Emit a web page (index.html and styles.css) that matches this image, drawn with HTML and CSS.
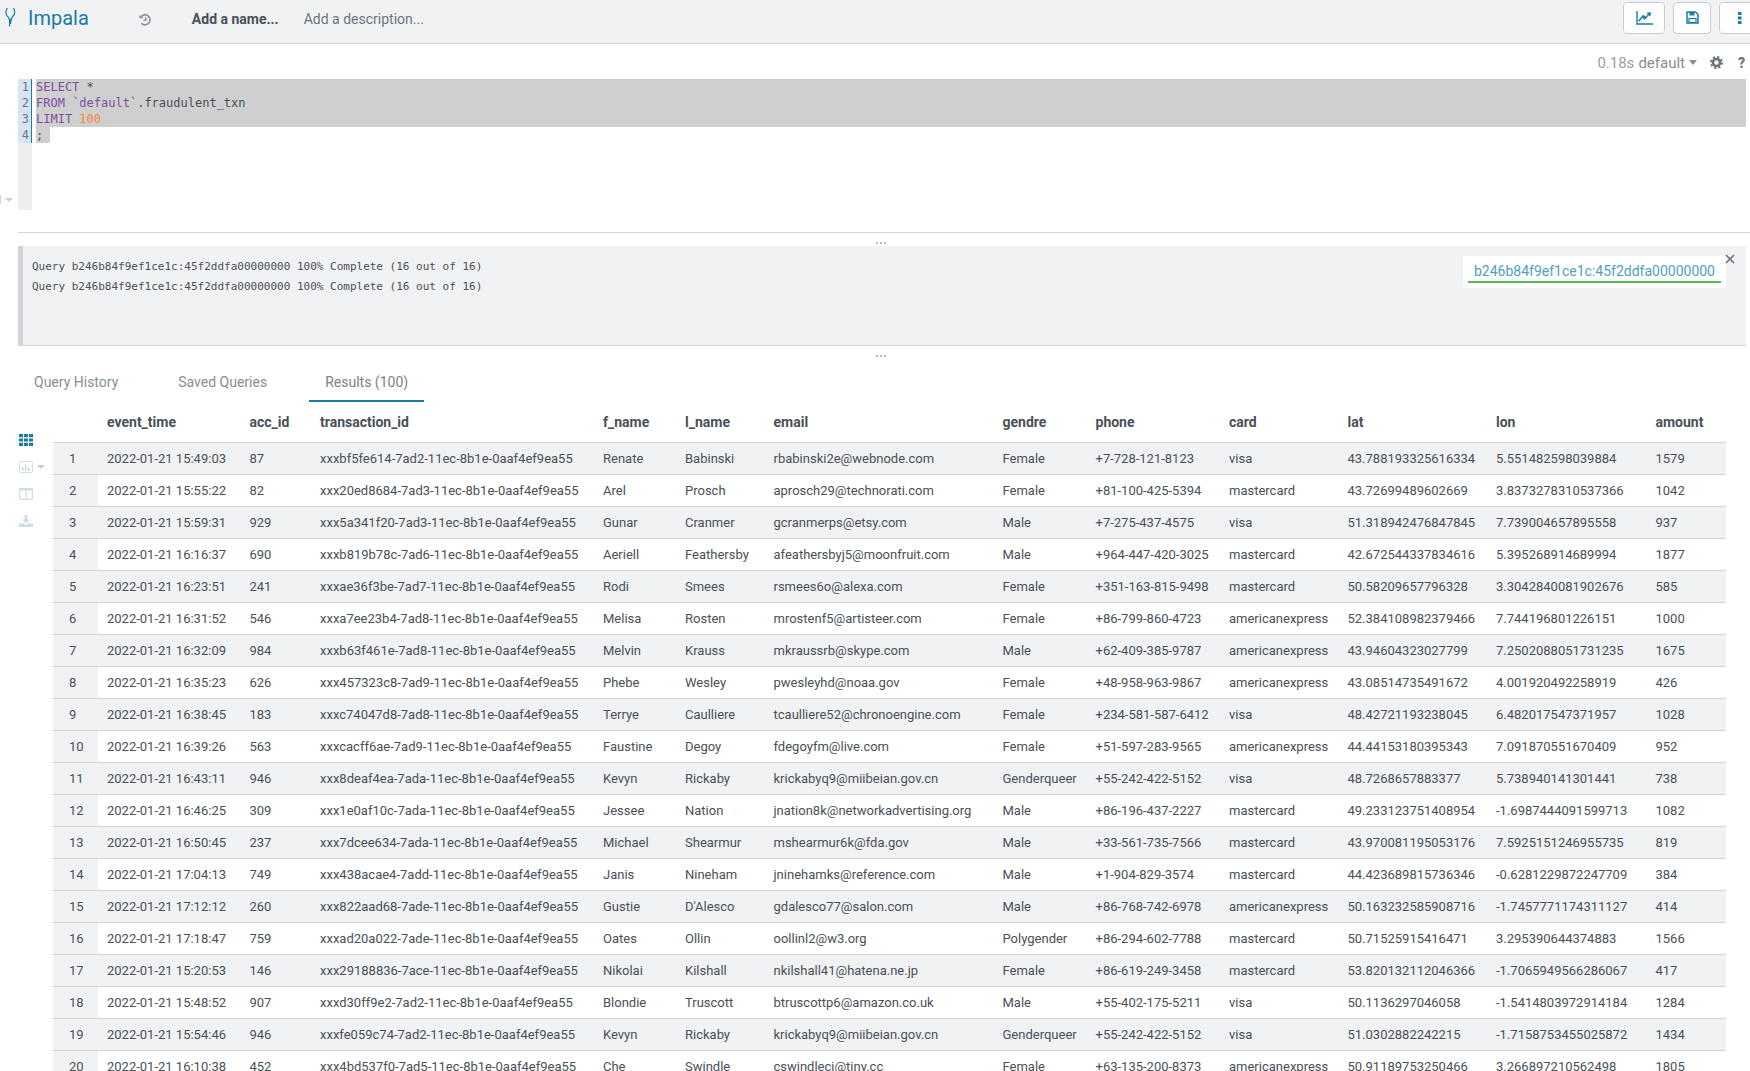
FILE: index.html
```html
<!DOCTYPE html>
<html lang="en">
<head>
<meta charset="utf-8">
<title>Impala</title>
<link rel="stylesheet" href="styles.css">
</head>
<body>
<div class="app">
  <header class="topbar">
    <svg class="logo" viewBox="0 0 11 19" width="11" height="19"><path d="M2.500 0C.3 3 .2 6.500 3.500 9.500 4.700 10.600 4.800 13 4.600 18.500M8.500 0c1.700 3 1.600 6.500-1.200 9C6.400 9.900 6 12 5.500 16" fill="none" stroke="#1b7ca3" stroke-width="1.200"/><path d="M3.800 11l3-.5-1.600 5z" fill="#1b7ca3"/></svg>
    <span class="brand">Impala</span>
    <svg class="history" viewBox="0 0 14 14" width="13" height="14"><path d="M2.200 3.500A5.400 5.400 0 1 1 2.500 10.500" fill="none" stroke="#868e96" stroke-width="1.700"/><path d="M.5 1.500l4.500 3.700H.5z" fill="#868e96"/><path d="M7.200 4v3.400H4.800" fill="none" stroke="#868e96" stroke-width="1.500"/></svg>
    <span class="query-name">Add a name...</span>
    <span class="query-desc">Add a description...</span>
    <div class="actions">
      <button class="btn btn-chart"><svg viewBox="0 0 17 14" width="17" height="14"><path d="M1 0v13h16" fill="none" stroke="#1b7ca3" stroke-width="1.400"/><path d="M3 10.500l3.500-4 2.500 2 3.500-4.500 1.500 1.200.8-3.700-3.700.4 1.200 1.100-2.500 3-2.500-2-5 5.500z" fill="#1b7ca3" stroke="#1b7ca3" stroke-width=".6"/></svg></button>
      <button class="btn btn-save"><svg viewBox="0 0 13 13" width="13" height="13"><path d="M1 1h8.500L12 3.500V12H1z" fill="none" stroke="#1b7ca3" stroke-width="1.500"/><rect x="3.500" y="1" width="5" height="3.500" fill="#1b7ca3"/><rect x="3" y="7.500" width="7" height="4" fill="none" stroke="#1b7ca3" stroke-width="1.200"/></svg></button>
      <button class="btn btn-more"><svg viewBox="0 0 4 12" width="4" height="12"><rect width="3.500" height="3" fill="#1b7ca3"/><rect y="4.500" width="3.500" height="3" fill="#1b7ca3"/><rect y="9" width="3.500" height="3" fill="#1b7ca3"/></svg></button>
    </div>
  </header>

  <div class="statusline">
    <span class="status-time">0.18s</span>
    <span class="status-db">default</span>
    <span class="caret caret-status"></span>
    <svg class="gear" viewBox="0 0 14 14" width="13" height="13"><circle cx="7" cy="7" r="3.800" fill="none" stroke="#6c757d" stroke-width="2.800"/><circle cx="7" cy="7" r="6" fill="none" stroke="#6c757d" stroke-width="2" stroke-dasharray="2.400 2.300"/></svg>
    <span class="help">?</span>
  </div>

  <section class="editor-row">
    <div class="editor-side"><span class="side-tick"></span><span class="caret caret-side"></span></div>
    <div class="gutter">
      <div class="gutter-lines">
        <div>1</div><div>2</div><div>3</div><div>4</div>
      </div>
    </div>
    <div class="code">
      <div class="code-line sel"><span class="kw">SELECT</span> *</div>
      <div class="code-line sel"><span class="kw">FROM</span> <span class="kw">`default`</span>.fraudulent_txn</div>
      <div class="code-line sel"><span class="kw">LIMIT</span> <span class="num">100</span></div>
      <div class="code-line"><span class="sel-end">;</span></div>
    </div>
  </section>

  <div class="divider"><span class="grip"></span></div>

  <section class="log">
    <div class="log-text">
      <div>Query b246b84f9ef1ce1c:45f2ddfa00000000 100% Complete (16 out of 16)</div>
      <div>Query b246b84f9ef1ce1c:45f2ddfa00000000 100% Complete (16 out of 16)</div>
    </div>
    <div class="job-box"><a class="job-link">b246b84f9ef1ce1c:45f2ddfa00000000</a></div>
    <svg class="close" viewBox="0 0 10 10" width="10" height="10"><path d="M1 1l8 8M9 1l-8 8" stroke="#6c757d" stroke-width="1.700"/></svg>
  </section>
  <div class="grip-row"><span class="grip"></span></div>

  <nav class="tabs">
    <span class="tab tab-history">Query History</span>
    <span class="tab tab-saved">Saved Queries</span>
    <span class="tab tab-results">Results (100)</span>
  </nav>

  <section class="results">
    <aside class="tools">
      <svg class="tool tool-grid" viewBox="0 0 14 12" width="14" height="12"><path d="M0 0h4v3.200H0zM5 0h4v3.200H5zM10 0h4v3.200h-4zM0 4.400h4v3.200H0zM5 4.400h4v3.200H5zM10 4.400h4v3.200h-4zM0 8.800h4V12H0zM5 8.800h4V12H5zM10 8.800h4V12h-4z" fill="#1b7ca3"/></svg>
      <div class="tool-chart"><svg viewBox="0 0 14 12" width="14" height="12"><rect x=".5" y=".5" width="13" height="11" rx="1" fill="none" stroke="#d0dde4"/><path d="M3 6v4h1.300V6zM6 3.500V10h1.300V3.500zM9 7v3h1.300V7z" fill="#c6d5dd"/></svg><span class="caret caret-tool"></span></div>
      <svg class="tool tool-columns" viewBox="0 0 14 12" width="14" height="12"><rect x=".6" y=".6" width="12.800" height="10.800" rx="1" fill="none" stroke="#d0dde4" stroke-width="1.200"/><path d="M7 1v10" stroke="#d0dde4" stroke-width="1.200"/><path d="M1 1h12v1.500H1z" fill="#d0dde4"/></svg>
      <svg class="tool tool-download" viewBox="0 0 14 12" width="14" height="12"><path d="M5.500 0h3v4.500H11L7 8.300 3 4.500h2.500zM0 8.500h4.500L7 10l2.500-1.500H14V12H0z" fill="#d0dde4"/></svg>
    </aside>
    <div class="table-wrap">
      <table class="grid">
        <colgroup>
          <col class="c-idx"><col class="c-time"><col class="c-acc"><col class="c-txn"><col class="c-fn"><col class="c-ln"><col class="c-email"><col class="c-gen"><col class="c-phone"><col class="c-card"><col class="c-lat"><col class="c-lon"><col class="c-amt">
        </colgroup>
        <thead>
          <tr><th></th><th>event_time</th><th>acc_id</th><th>transaction_id</th><th>f_name</th><th>l_name</th><th>email</th><th>gendre</th><th>phone</th><th>card</th><th>lat</th><th>lon</th><th>amount</th></tr>
        </thead>
        <tbody>
          <tr><td>1</td><td>2022-01-21 15:49:03</td><td>87</td><td>xxxbf5fe614-7ad2-11ec-8b1e-0aaf4ef9ea55</td><td>Renate</td><td>Babinski</td><td>rbabinski2e@webnode.com</td><td>Female</td><td>+7-728-121-8123</td><td>visa</td><td>43.788193325616334</td><td>5.551482598039884</td><td>1579</td></tr>
          <tr><td>2</td><td>2022-01-21 15:55:22</td><td>82</td><td>xxx20ed8684-7ad3-11ec-8b1e-0aaf4ef9ea55</td><td>Arel</td><td>Prosch</td><td>aprosch29@technorati.com</td><td>Female</td><td>+81-100-425-5394</td><td>mastercard</td><td>43.72699489602669</td><td>3.8373278310537366</td><td>1042</td></tr>
          <tr><td>3</td><td>2022-01-21 15:59:31</td><td>929</td><td>xxx5a341f20-7ad3-11ec-8b1e-0aaf4ef9ea55</td><td>Gunar</td><td>Cranmer</td><td>gcranmerps@etsy.com</td><td>Male</td><td>+7-275-437-4575</td><td>visa</td><td>51.318942476847845</td><td>7.739004657895558</td><td>937</td></tr>
          <tr><td>4</td><td>2022-01-21 16:16:37</td><td>690</td><td>xxxb819b78c-7ad6-11ec-8b1e-0aaf4ef9ea55</td><td>Aeriell</td><td>Feathersby</td><td>afeathersbyj5@moonfruit.com</td><td>Male</td><td>+964-447-420-3025</td><td>mastercard</td><td>42.672544337834616</td><td>5.395268914689994</td><td>1877</td></tr>
          <tr><td>5</td><td>2022-01-21 16:23:51</td><td>241</td><td>xxxae36f3be-7ad7-11ec-8b1e-0aaf4ef9ea55</td><td>Rodi</td><td>Smees</td><td>rsmees6o@alexa.com</td><td>Female</td><td>+351-163-815-9498</td><td>mastercard</td><td>50.58209657796328</td><td>3.3042840081902676</td><td>585</td></tr>
          <tr><td>6</td><td>2022-01-21 16:31:52</td><td>546</td><td>xxxa7ee23b4-7ad8-11ec-8b1e-0aaf4ef9ea55</td><td>Melisa</td><td>Rosten</td><td>mrostenf5@artisteer.com</td><td>Female</td><td>+86-799-860-4723</td><td>americanexpress</td><td>52.384108982379466</td><td>7.744196801226151</td><td>1000</td></tr>
          <tr><td>7</td><td>2022-01-21 16:32:09</td><td>984</td><td>xxxb63f461e-7ad8-11ec-8b1e-0aaf4ef9ea55</td><td>Melvin</td><td>Krauss</td><td>mkraussrb@skype.com</td><td>Male</td><td>+62-409-385-9787</td><td>americanexpress</td><td>43.94604323027799</td><td>7.2502088051731235</td><td>1675</td></tr>
          <tr><td>8</td><td>2022-01-21 16:35:23</td><td>626</td><td>xxx457323c8-7ad9-11ec-8b1e-0aaf4ef9ea55</td><td>Phebe</td><td>Wesley</td><td>pwesleyhd@noaa.gov</td><td>Female</td><td>+48-958-963-9867</td><td>americanexpress</td><td>43.08514735491672</td><td>4.001920492258919</td><td>426</td></tr>
          <tr><td>9</td><td>2022-01-21 16:38:45</td><td>183</td><td>xxxc74047d8-7ad8-11ec-8b1e-0aaf4ef9ea55</td><td>Terrye</td><td>Caulliere</td><td>tcaulliere52@chronoengine.com</td><td>Female</td><td>+234-581-587-6412</td><td>visa</td><td>48.42721193238045</td><td>6.482017547371957</td><td>1028</td></tr>
          <tr><td>10</td><td>2022-01-21 16:39:26</td><td>563</td><td>xxxcacff6ae-7ad9-11ec-8b1e-0aaf4ef9ea55</td><td>Faustine</td><td>Degoy</td><td>fdegoyfm@live.com</td><td>Female</td><td>+51-597-283-9565</td><td>americanexpress</td><td>44.44153180395343</td><td>7.091870551670409</td><td>952</td></tr>
          <tr><td>11</td><td>2022-01-21 16:43:11</td><td>946</td><td>xxx8deaf4ea-7ada-11ec-8b1e-0aaf4ef9ea55</td><td>Kevyn</td><td>Rickaby</td><td>krickabyq9@miibeian.gov.cn</td><td>Genderqueer</td><td>+55-242-422-5152</td><td>visa</td><td>48.7268657883377</td><td>5.738940141301441</td><td>738</td></tr>
          <tr><td>12</td><td>2022-01-21 16:46:25</td><td>309</td><td>xxx1e0af10c-7ada-11ec-8b1e-0aaf4ef9ea55</td><td>Jessee</td><td>Nation</td><td>jnation8k@networkadvertising.org</td><td>Male</td><td>+86-196-437-2227</td><td>mastercard</td><td>49.233123751408954</td><td>-1.6987444091599713</td><td>1082</td></tr>
          <tr><td>13</td><td>2022-01-21 16:50:45</td><td>237</td><td>xxx7dcee634-7ada-11ec-8b1e-0aaf4ef9ea55</td><td>Michael</td><td>Shearmur</td><td>mshearmur6k@fda.gov</td><td>Male</td><td>+33-561-735-7566</td><td>mastercard</td><td>43.970081195053176</td><td>7.5925151246955735</td><td>819</td></tr>
          <tr><td>14</td><td>2022-01-21 17:04:13</td><td>749</td><td>xxx438acae4-7add-11ec-8b1e-0aaf4ef9ea55</td><td>Janis</td><td>Nineham</td><td>jninehamks@reference.com</td><td>Male</td><td>+1-904-829-3574</td><td>mastercard</td><td>44.423689815736346</td><td>-0.6281229872247709</td><td>384</td></tr>
          <tr><td>15</td><td>2022-01-21 17:12:12</td><td>260</td><td>xxx822aad68-7ade-11ec-8b1e-0aaf4ef9ea55</td><td>Gustie</td><td>D'Alesco</td><td>gdalesco77@salon.com</td><td>Male</td><td>+86-768-742-6978</td><td>americanexpress</td><td>50.163232585908716</td><td>-1.7457771174311127</td><td>414</td></tr>
          <tr><td>16</td><td>2022-01-21 17:18:47</td><td>759</td><td>xxxad20a022-7ade-11ec-8b1e-0aaf4ef9ea55</td><td>Oates</td><td>Ollin</td><td>oollinl2@w3.org</td><td>Polygender</td><td>+86-294-602-7788</td><td>mastercard</td><td>50.71525915416471</td><td>3.295390644374883</td><td>1566</td></tr>
          <tr><td>17</td><td>2022-01-21 15:20:53</td><td>146</td><td>xxx29188836-7ace-11ec-8b1e-0aaf4ef9ea55</td><td>Nikolai</td><td>Kilshall</td><td>nkilshall41@hatena.ne.jp</td><td>Female</td><td>+86-619-249-3458</td><td>mastercard</td><td>53.820132112046366</td><td>-1.7065949566286067</td><td>417</td></tr>
          <tr><td>18</td><td>2022-01-21 15:48:52</td><td>907</td><td>xxxd30ff9e2-7ad2-11ec-8b1e-0aaf4ef9ea55</td><td>Blondie</td><td>Truscott</td><td>btruscottp6@amazon.co.uk</td><td>Male</td><td>+55-402-175-5211</td><td>visa</td><td>50.1136297046058</td><td>-1.5414803972914184</td><td>1284</td></tr>
          <tr><td>19</td><td>2022-01-21 15:54:46</td><td>946</td><td>xxxfe059c74-7ad2-11ec-8b1e-0aaf4ef9ea55</td><td>Kevyn</td><td>Rickaby</td><td>krickabyq9@miibeian.gov.cn</td><td>Genderqueer</td><td>+55-242-422-5152</td><td>visa</td><td>51.0302882242215</td><td>-1.7158753455025872</td><td>1434</td></tr>
          <tr><td>20</td><td>2022-01-21 16:10:38</td><td>452</td><td>xxx4bd537f0-7ad5-11ec-8b1e-0aaf4ef9ea55</td><td>Che</td><td>Swindle</td><td>cswindlecj@tiny.cc</td><td>Female</td><td>+63-135-200-8373</td><td>americanexpress</td><td>50.91189753250466</td><td>3.266897210562498</td><td>1805</td></tr>
        </tbody>
      </table>
    </div>
  </section>
</div>
</body>
</html>
```
FILE: styles.css
```css
* { box-sizing: border-box; }
html, body { margin: 0; height: 100%; overflow: hidden; background: #fff; }
body { font-family: Roboto, "Liberation Sans", sans-serif; font-size: 13px; color: #495057; }
.app { height: 1071px; display: flex; flex-direction: column; overflow: hidden; }

.topbar { flex: none; height: 44px; background: #f1f2f4; border-bottom: 1px solid #d2d4d6; display: flex; align-items: center; overflow: hidden; padding-left: 5px; }
.logo { flex: none; margin-top: -8px; }
.brand { font-size: 20px; color: #1b7ca3; margin-left: 12px; margin-top: -7px; }
.history { flex: none; margin-left: 50px; margin-top: -3px; }
.query-name { font-size: 14px; font-weight: 700; color: #495057; margin-left: 40px; margin-top: -6px; }
.query-desc { font-size: 14px; color: #6c757d; margin-left: 25px; margin-top: -6px; }
.actions { margin-left: auto; display: flex; gap: 8px; margin-top: -8px; margin-right: -11px; }
.btn { height: 32px; background: #fff; border: 1px solid #c9cdd1; border-radius: 4px; padding: 0; display: flex; align-items: center; justify-content: center; }
.btn-chart { width: 42px; }
.btn-save { width: 38px; }
.btn-more { width: 42px; }

.statusline { flex: none; height: 35px; display: flex; align-items: center; justify-content: flex-end; padding: 2px 4px 0 0; font-size: 15px; }
.status-time { color: #979ea5; }
.status-db { color: #868e96; margin-left: 4px; }
.caret { display: inline-block; width: 0; height: 0; border-left: 4px solid transparent; border-right: 4px solid transparent; border-top: 4px solid #868e96; }
.caret-status { margin-left: 4px; border-left-width: 4.5px; border-right-width: 4.5px; border-top-width: 5px; }
.gear { margin-left: 13px; }
.help { font-weight: 900; color: #6c757d; font-size: 14px; margin-left: 15px; width: 8px; }

.editor-row { flex: none; display: flex; height: 131px; padding-right: 4px; }
.editor-side { width: 18px; flex: none; display: flex; align-items: flex-end; padding-bottom: 6px; }
.side-tick { width: 1px; height: 9px; background: #ced4da; }
.caret-side { margin-left: 4px; margin-bottom: 2px; border-top-color: #c9cdd1; }
.gutter { width: 14px; flex: none; background: #eeeeee; font-family: "DejaVu Sans Mono", monospace; font-size: 12px; line-height: 16px; color: #6c757d; text-align: right; }
.gutter-lines { background: #d6e6f0; border-right: 1px solid #1b7ca3; padding-right: 2px; }
.code { flex: 1; padding-left: 4px; font-family: "DejaVu Sans Mono", monospace; font-size: 12px; line-height: 16px; color: #495057; }
.code-line { height: 16px; white-space: pre; }
.sel { background: #cfcfcf; }
.sel-end { display: inline-block; width: 14px; height: 16px; background: #cfcfcf; border-radius: 0 0 2px 0; }
.kw { color: #7b4ea3; }
.num { color: #f58a3c; }

.divider { flex: none; height: 1px; margin: 22px 0 0 18px; background: #d2d4d6; position: relative; }
.grip { display: block; width: 12px; height: 2px; background-image: radial-gradient(circle, #b8bcc0 1px, transparent 1px); background-size: 4px 2px; }
.divider .grip { position: absolute; left: 857px; top: 10px; }

.log { flex: none; display: flex; height: 100px; margin: 13px 4px 0 18px; background: #f1f2f4; border-left: 5px solid #ced4da; border-bottom: 1px solid #d2d4d6; position: relative; }
.log-text { flex: 1; padding: 11px 0 0 9px; font-family: "DejaVu Sans Mono", monospace; font-size: 11px; line-height: 20px; color: #495057; }
.job-box { flex: none; align-self: flex-start; margin: 10px 20px 0 0; width: 263px; height: 32px; background: #fff; padding: 6px 5px 0; }
.job-link { display: block; height: 21px; border-bottom: 2px solid #5cb85c; font-size: 14px; line-height: 19px; color: #4f9fbf; text-align: center; white-space: nowrap; }
.close { position: absolute; right: 11px; top: 8px; }
.grip-row { flex: none; height: 9px; padding: 9px 0 0 875px; }

.tabs { flex: none; height: 47px; display: flex; font-size: 14px; color: #868e96; padding-left: 18px; }
.tab { padding: 19px 16px 0; height: 47px; white-space: nowrap; }
.tab-saved { margin-left: 28px; }
.tab-results { margin-left: 26px; border-bottom: 2px solid #1b7ca3; color: #7a828a; width: 115px; }

.results { flex: 1; display: flex; min-height: 0; }
.tools { flex: none; width: 53px; padding: 32px 0 0 19px; display: flex; flex-direction: column; gap: 15px; }
.tool { display: block; }
.tool-chart { display: flex; align-items: center; height: 12px; }
.caret-tool { margin-left: 4px; border-top-color: #c9cdd1; }
.table-wrap { flex: none; width: 1673px; }
.grid { width: 1673px; border-collapse: separate; border-spacing: 0; table-layout: fixed; }
.c-idx { width: 45px; } .c-time { width: 142.5px; } .c-acc { width: 70.5px; } .c-txn { width: 283px; }
.c-fn { width: 82px; } .c-ln { width: 88.5px; } .c-email { width: 229px; } .c-gen { width: 93px; }
.c-phone { width: 133.5px; } .c-card { width: 118.5px; } .c-lat { width: 148.5px; } .c-lon { width: 159.5px; } .c-amt { width: 79.5px; }
.grid th { height: 41px; padding: 0 0 1px 9px; text-align: left; font-size: 14px; font-weight: 700; color: #495057; border-bottom: 1px solid #d2d4d6; white-space: nowrap; }
.grid td { height: 32px; padding: 0 0 0 9px; font-size: 13px; color: #495057; border-bottom: 1px solid #d2d4d6; white-space: nowrap; overflow: hidden; }
.grid td:first-child { padding-left: 16px; background: #f1f2f4; }
.grid tbody tr:nth-child(odd) td { background: #f1f2f4; }
```
